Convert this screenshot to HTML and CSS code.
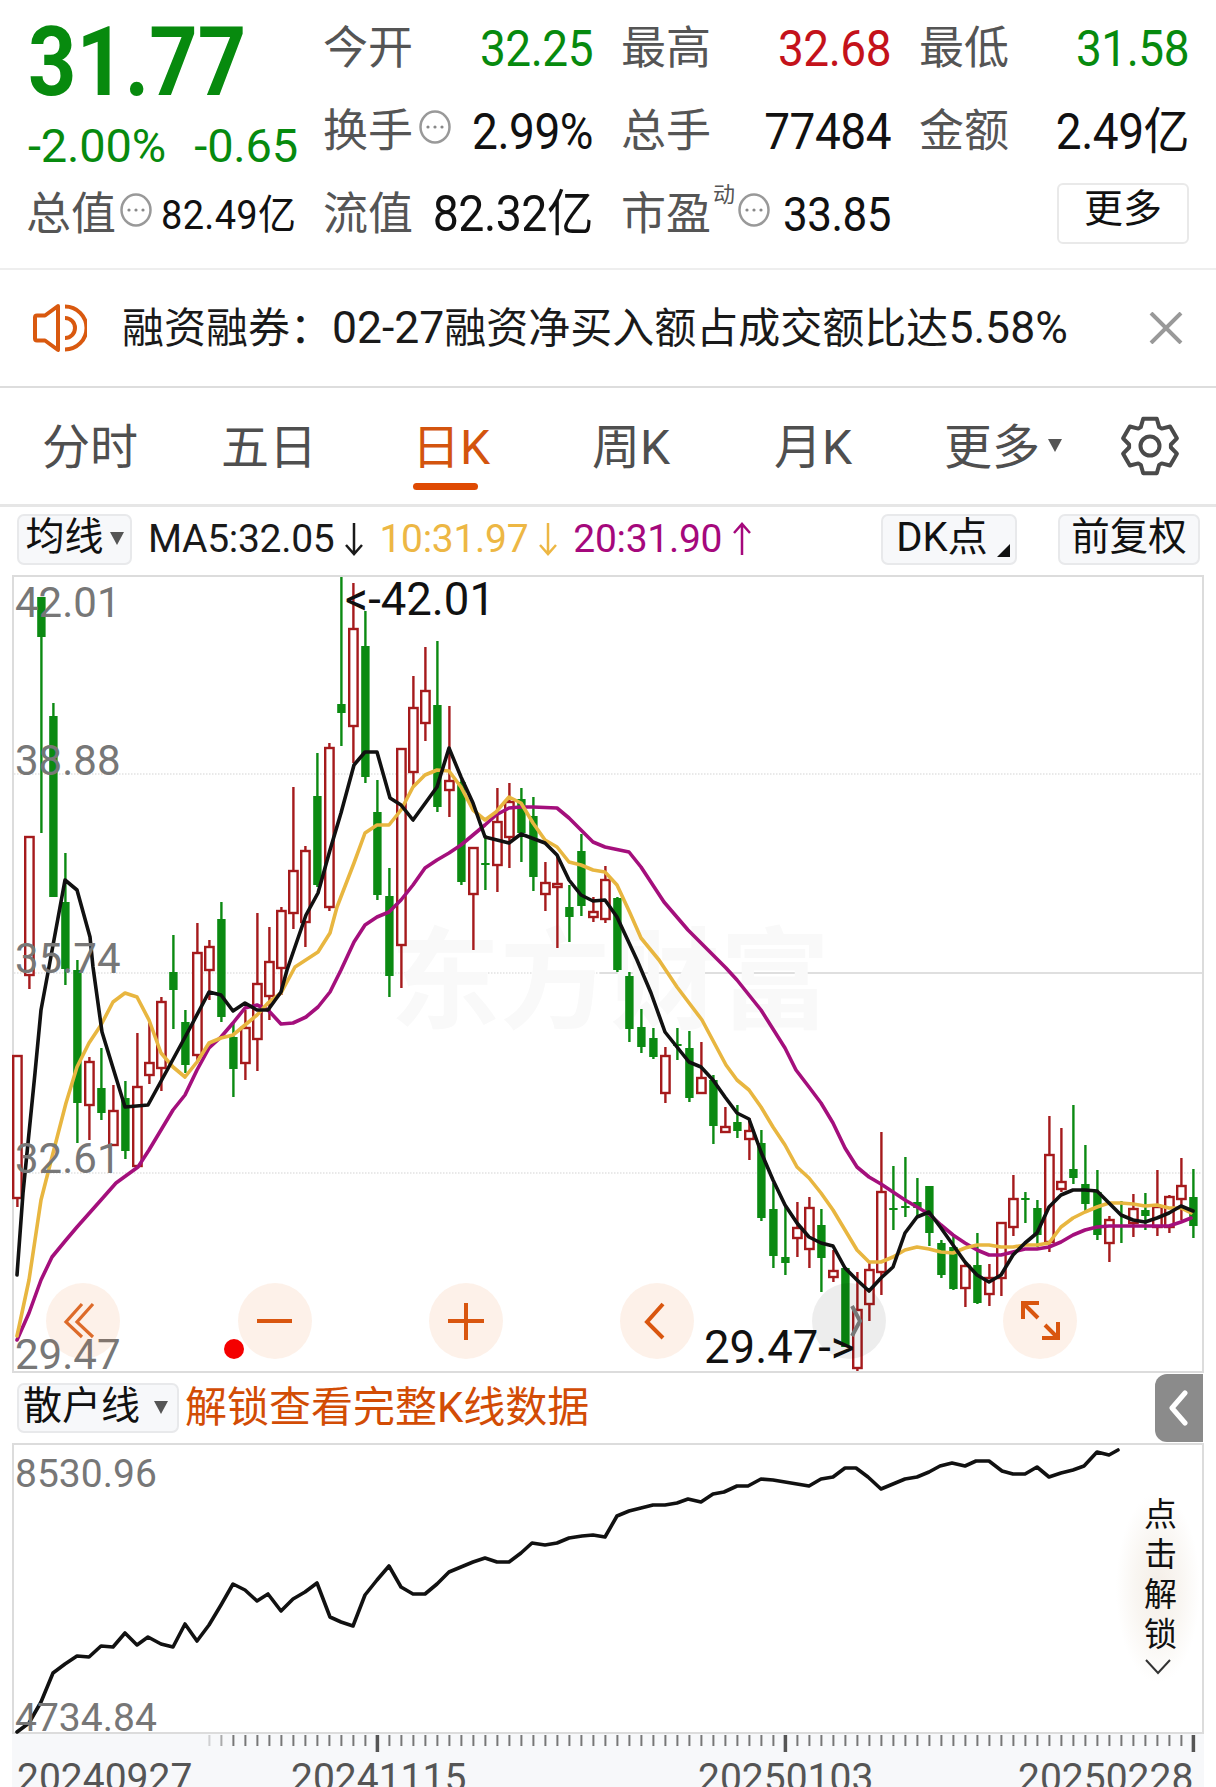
FILE: index.html
```html
<!DOCTYPE html>
<html lang="zh-CN">
<head>
<meta charset="utf-8">
<title>日K</title>
<link rel="stylesheet" href="styles.css">
</head>
<body>
<main class="page">

<section class="quote">
  <div class="headline">
    <div class="price down">31.77</div>
    <div class="change down"><span>-2.00%</span><span>-0.65</span></div>
    <div class="cap">
      <span class="lbl">总值</span>
      <svg class="dots" viewBox="0 0 32 34"><ellipse cx="16" cy="17" rx="14.5" ry="15.5"/><circle cx="9" cy="17" r="1.6"/><circle cx="16" cy="17" r="1.6"/><circle cx="23" cy="17" r="1.6"/></svg>
      <span class="val small">82.49亿</span>
    </div>
  </div>
  <div class="stats">
    <div class="stat"><span class="lbl">今开</span><span class="val down">32.25</span></div>
    <div class="stat"><span class="lbl">最高</span><span class="val rise">32.68</span></div>
    <div class="stat"><span class="lbl">最低</span><span class="val down">31.58</span></div>
    <div class="stat">
      <span class="lblset"><span class="lbl">换手</span><svg class="dots" viewBox="0 0 32 34"><ellipse cx="16" cy="17" rx="14.5" ry="15.5"/><circle cx="9" cy="17" r="1.6"/><circle cx="16" cy="17" r="1.6"/><circle cx="23" cy="17" r="1.6"/></svg></span>
      <span class="val">2.99%</span>
    </div>
    <div class="stat"><span class="lbl">总手</span><span class="val">77484</span></div>
    <div class="stat"><span class="lbl">金额</span><span class="val">2.49亿</span></div>
    <div class="stat"><span class="lbl">流值</span><span class="val wide">82.32亿</span></div>
    <div class="stat">
      <span class="lblset"><span class="lbl">市盈</span><sup class="dyn">动</sup><svg class="dots tight" viewBox="0 0 32 34"><ellipse cx="16" cy="17" rx="14.5" ry="15.5"/><circle cx="9" cy="17" r="1.6"/><circle cx="16" cy="17" r="1.6"/><circle cx="23" cy="17" r="1.6"/></svg></span>
      <span class="val narrow">33.85</span>
    </div>
    <div class="stat end"><button class="more">更多</button></div>
  </div>
</section>

<section class="notice">
  <svg class="speaker" viewBox="0 0 54 50"><path d="M25 3 12 12.500H4Q2 12.500 2 14.500V35.500Q2 37.500 4 37.500H12L25 47Z"/><path d="M32 3.500A21.500 21.500 0 0 1 32 46.500"/><path d="M32 15A10 10 0 0 1 32 35"/></svg>
  <p class="notice-text">融资融券：<span class="nnum">02-27</span>融资净买入额占成交额比达<span class="nnum">5.58%</span></p>
  <svg class="close" viewBox="0 0 34 32"><path d="M2 1 32 31M32 1 2 31"/></svg>
</section>

<nav class="tabs">
  <span class="tab">分时</span>
  <span class="tab">五日</span>
  <span class="tab active">日K</span>
  <span class="tab">周K</span>
  <span class="tab">月K</span>
  <span class="tab">更多<i class="tri tab-tri"></i></span>
  <span class="gear-cell">
    <svg class="gear" viewBox="-30 -30 60 60"><path d="M-9.200-18.900-6.800-27.200H6.800L9.200-18.900 11.700-17.400 20.100-19.500 26.900-7.700 20.900-1.500V1.500L26.900 7.700 20.100 19.500 11.700 17.400 9.200 18.900 6.800 27.200H-6.800L-9.200 18.900-11.700 17.400-20.100 19.500-26.900 7.700-20.900 1.500V-1.500L-26.900-7.700-20.100-19.500-11.700-17.400Z"/><circle r="9.500"/></svg>
  </span>
</nav>

<section class="toolbar">
  <button class="chip ma-chip">均线<i class="tri"></i></button>
  <div class="ma-values">
    <span class="ma5">MA5:32.05</span><svg class="arw ma5" viewBox="0 0 22 34"><path d="M11 1V32M3 23 11 32 19 23"/></svg>
    <span class="ma10">10:31.97</span><svg class="arw ma10" viewBox="0 0 22 34"><path d="M11 1V32M3 23 11 32 19 23"/></svg>
    <span class="ma20">20:31.90</span><svg class="arw ma20" viewBox="0 0 22 34"><path d="M11 33V2M3 11 11 2 19 11"/></svg>
  </div>
  <button class="chip dk-chip">DK点<i class="corner"></i></button>
  <button class="chip fq-chip">前复权</button>
</section>

<section class="kchart">
  <svg class="plot" viewBox="14 577 1188 794" width="1188" height="794">
    <line class="grid" x1="14" x2="1202" y1="774" y2="774"/>
    <line class="grid" x1="14" x2="600" y1="973" y2="973"/>
    <line class="grid solid" x1="600" x2="1202" y1="973" y2="973"/>
    <line class="grid" x1="14" x2="1202" y1="1173" y2="1173"/>
    <text class="mark" x="390" y="1020">东方财富</text>
    <g id="candles"></g>
    <polyline class="ln ma20-ln" points="17,1340 29,1313 41,1280 52,1257 66,1240 77,1227 101,1200 116,1183 138,1167 149,1150 161,1130 173,1110 185,1095 197,1070 209,1048 221,1037 233,1023 245,1008 257,1005 268,1010 281,1024 293,1023 306,1017 318,1007 330,992 341,970 354,942 365,925 377,917 389,912 401,900 413,885 425,868 437,860 449,853 461,845 473,835 485,825 496,815 509,808 521,807 533,807 557,808 569,818 581,830 593,842 605,847 629,852 641,867 664,902 688,930 703,945 726,968 737,980 761,1010 785,1048 796,1070 809,1087 821,1103 833,1123 845,1148 857,1167 869,1177 881,1184 893,1192 905,1200 917,1207 929,1214 941,1225 953,1235 965,1243 977,1250 989,1255 1001,1255 1013,1252 1025,1249 1037,1249 1049,1247 1061,1242 1073,1235 1085,1230 1097,1227 1109,1226 1169,1226 1181,1222 1191,1218"/>
    <polyline class="ln ma10-ln" points="17,1336 29,1280 41,1200 52,1157 66,1103 77,1067 89,1043 101,1025 113,1002 125,993 137,997 149,1020 161,1053 173,1067 185,1077 197,1062 209,1043 221,1038 233,1035 245,1025 257,1015 268,1003 281,993 295,967 318,952 330,933 337,907 354,863 365,833 377,825 389,825 401,810 413,787 425,775 437,770 449,771 461,787 473,810 485,820 496,812 509,797 521,803 533,823 545,840 557,847 569,862 581,865 593,870 605,872 617,885 630,913 641,938 659,960 677,987 702,1020 726,1065 737,1080 749,1090 761,1107 773,1127 785,1145 797,1167 809,1178 821,1193 833,1210 845,1230 857,1250 869,1262 881,1262 893,1257 905,1250 917,1247 929,1249 941,1252 953,1253 965,1248 977,1245 989,1245 1001,1247 1013,1247 1025,1245 1037,1245 1049,1243 1061,1227 1073,1218 1085,1212 1097,1207 1109,1203 1121,1203 1133,1204 1145,1206 1157,1205 1169,1208 1181,1208 1191,1213"/>
    <polyline class="ln ma5-ln" points="17,1275 23,1193 35,1073 41,1010 49,967 65,880 77,890 90,937 93,967 102,1032 125,1107 148,1105 171,1063 190,1028 209,992 221,995 233,1011 245,1003 257,1010 268,1010 281,992 287,970 306,915 318,893 330,850 341,813 354,765 365,752 377,752 390,798 401,805 413,820 437,787 449,748 461,777 473,803 485,837 509,843 521,834 545,843 557,855 569,880 581,895 593,901 605,900 617,917 637,960 651,993 665,1032 677,1047 689,1062 701,1067 713,1080 725,1097 737,1113 749,1119 761,1152 773,1180 785,1205 797,1223 809,1237 821,1243 833,1246 845,1268 857,1280 869,1291 881,1278 893,1267 905,1233 917,1217 929,1212 941,1228 953,1245 965,1262 977,1275 989,1282 1001,1275 1013,1255 1025,1243 1037,1233 1049,1207 1061,1195 1073,1190 1085,1190 1097,1191 1109,1203 1121,1215 1133,1220 1145,1222 1157,1218 1169,1213 1181,1206 1193,1211"/>

    <text class="ax" x="15" y="617">42.01</text>
    <text class="ax" x="15" y="775">38.88</text>
    <text class="ax" x="15" y="973">35.74</text>
    <text class="ax" x="15" y="1173">32.61</text>
    <text class="ax" x="15" y="1369">29.47</text>
    <text class="ext" x="345" y="615">&lt;-42.01</text>
    <text class="ext" x="704" y="1363">29.47-&gt;</text>

    <ellipse class="disc" cx="83" cy="1321" rx="37" ry="38"/>
    <ellipse class="disc" cx="275" cy="1321" rx="37" ry="38"/>
    <ellipse class="disc" cx="466" cy="1321" rx="37" ry="38"/>
    <ellipse class="disc" cx="657" cy="1321" rx="37" ry="38"/>
    <ellipse class="disc grey" cx="849" cy="1321" rx="37" ry="38"/>
    <ellipse class="disc" cx="1040" cy="1321" rx="37" ry="38"/>
    <path class="glyph thin" d="M82 1304 66 1322 82 1337M93 1304 77 1322 93 1337"/>
    <path class="glyph" d="M257 1321H292"/>
    <path class="glyph" d="M448 1321H484M466 1303V1340"/>
    <path class="glyph" d="M663 1304 647 1322 663 1338"/>
    <path class="glyph dim" d="M852 1306 860 1321 852 1336"/>
    <path class="glyph" d="M1039 1303H1023V1319M1024 1304 1038 1318M1042 1338H1058V1322M1057 1337 1045 1325"/>
    <ellipse class="dot" cx="234" cy="1349" rx="10" ry="10"/>
  </svg>
</section>

<section class="subhead">
  <button class="chip sub-chip">散户线<i class="tri"></i></button>
  <span class="unlock">解锁查看完整K线数据</span>
  <span class="lock-tab"><svg viewBox="0 0 22 36"><path d="M17 3 4 18 17 33"/></svg></span>
</section>

<section class="subchart">
  <svg class="plot" viewBox="14 1445 1188 287" width="1188" height="287">
    <polyline class="ln retail" points="17,1732 29,1723 41,1702 53,1673 65,1664 77,1656 89,1657 101,1646 113,1647 125,1633 137,1645 148,1637 161,1644 173,1647 185,1624 197,1641 209,1625 221,1605 233,1584 245,1590 257,1601 268,1594 281,1611 293,1599 305,1592 317,1583 330,1617 341,1622 353,1626 365,1595 377,1580 389,1566 401,1587 413,1594 425,1594 437,1584 449,1572 461,1567 473,1562 485,1558 497,1562 509,1562 521,1553 532,1543 545,1545 557,1543 569,1538 582,1536 593,1535 605,1537 617,1516 629,1511 641,1508 653,1505 665,1505 677,1503 688,1499 701,1502 713,1494 724,1492 737,1486 748,1486 761,1479 773,1480 785,1482 797,1484 809,1486 821,1479 833,1477 845,1468 856,1468 868,1477 881,1489 893,1484 905,1479 917,1477 929,1472 940,1466 952,1463 965,1466 976,1461 989,1461 1002,1471 1013,1474 1025,1474 1037,1467 1049,1477 1061,1473 1073,1470 1084,1466 1097,1452 1109,1455 1118,1450"/>
    <text class="ax sub" x="15" y="1487">8530.96</text>
    <text class="ax sub" x="15" y="1731">4734.84</text>
  </svg>
  <div class="unlock-side">
    <span class="side-text">点击解锁</span>
    <svg viewBox="0 0 26 16"><path d="M1 1 13 14 25 1"/></svg>
  </div>
</section>

<section class="timeaxis">
  <svg viewBox="12 1734 1192 53" width="1192" height="53">
    <g id="ticks"></g>
    <text class="date" x="17" y="1791">20240927</text>
    <text class="date" x="291" y="1791">20241115</text>
    <text class="date" x="698" y="1791">20250103</text>
    <text class="date" x="1018" y="1791">20250228</text>
  </svg>
</section>

</main>
<script src="chart.js"></script>
</body>
</html>
```
FILE: styles.css
```css
* { box-sizing: border-box; }
html, body { margin: 0; padding: 0; background: #fff; }
body { width: 1216px; height: 1787px; overflow: hidden; }
.page {
  width: 1216px; height: 1787px; overflow: hidden;
  font-family: Roboto, "Noto Sans CJK SC", sans-serif; color: #111;
}
button { font: inherit; color: inherit; padding: 0; }

.down { color: #078a0e; }
.rise { color: #c4121b; }

/* quote */
.quote { display: flex; height: 270px; border-bottom: 2px solid #eee; padding: 7px 0 0 28px; }
.headline { width: 295px; flex: none; }
.price { height: 110px; line-height: 110px; font-size: 97px; font-weight: 700; transform: scaleX(.87); transform-origin: 0 50%; white-space: nowrap; }
.change { height: 56px; display: flex; justify-content: space-between; align-items: center; width: 270px; font-size: 47px; letter-spacing: -.2px; }
.cap { height: 83px; display: flex; align-items: center; margin-left: -2px; }
.cap .dots { margin: -10px 9px 0 4px; }
.stats { display: grid; grid-template-columns: repeat(3, 270px); grid-auto-rows: 83px; column-gap: 28px; }
.stat { display: flex; justify-content: space-between; align-items: center; }
.stat.end { justify-content: flex-end; margin-top: -2px; }
.lblset { display: flex; align-items: center; }
.lbl { font-size: 45px; color: #555; line-height: 1; white-space: nowrap; }
.val { font-size: 46px; letter-spacing: -.5px; line-height: 1; white-space: nowrap; transform: scaleY(1.08); }
.val.wide { font-size: 46.500px; }
.val.narrow { font-size: 44px; }
.val.small { font-size: 38px; letter-spacing: .3px; }
.dots { width: 32px; height: 34px; flex: none; margin: -10px 0 0 6px; }
.dots.tight { margin-left: 0; }
.dots ellipse { fill: none; stroke: #999; stroke-width: 2.500; }
.dots circle { fill: #888; }
.dyn { font-size: 22px; color: #555; line-height: 1; align-self: flex-start; margin: -8px 3px 0 2px; width: 22px; }
.more { width: 132px; height: 61px; font-size: 39px; line-height: 1; padding-bottom: 8px; background: #fff; border: 2px solid #e9e9e9; border-radius: 6px; }

/* notice */
.notice { display: flex; align-items: center; height: 118px; border-bottom: 2px solid #ddd; padding: 0 33px; }
.speaker { width: 54px; height: 50px; flex: none; fill: none; stroke: #d9590f; stroke-width: 4; stroke-linejoin: round; }
.notice-text { margin: 0 0 0 35px; font-size: 42px; line-height: 1; white-space: nowrap; color: #1a1a1a; }
.nnum { font-size: 44.500px; }
.close { width: 34px; height: 32px; margin-left: auto; fill: none; stroke: #999; stroke-width: 4; }

/* tabs */
.tabs { display: grid; grid-template-columns: 180px 178px 186px 174px 190px 190px 1fr; height: 119px; border-bottom: 3px solid #e6e6e6; align-items: center; padding-top: 4px; }
.tab { justify-self: center; font-size: 48px; color: #4f4f4f; line-height: 1; position: relative; display: flex; align-items: center; }
.tab.active { color: #d3540e; }
.tab.active::after { content: ""; position: absolute; left: 1px; width: 65px; height: 7px; top: 59px; border-radius: 4px; background: #df4a03; }
.tri { display: inline-block; width: 0; height: 0; border-left: 7px solid transparent; border-right: 7px solid transparent; border-top: 13px solid #555; }
.tab-tri { margin-left: 8px; margin-top: -6px; }
.gear-cell { display: flex; justify-content: flex-end; padding-right: 36px; margin-top: -4px; }
.gear { width: 60px; height: 60px; fill: none; stroke: #4a4a4a; stroke-width: 4; stroke-linejoin: round; }

/* toolbar */
.toolbar { display: flex; align-items: center; height: 68px; padding: 0 16px 4px 17px; }
.chip { height: 51px; padding-bottom: 3px; background: #f7f8fa; border: 2px solid #e8e9eb; border-radius: 7px; font-size: 39px; line-height: 1; display: flex; align-items: center; justify-content: center; position: relative; white-space: nowrap; }
.ma-chip { width: 115px; gap: 6px; }
.ma-chip .tri { margin-top: 2px; }
.ma-values { display: flex; align-items: center; margin-left: 16px; font-size: 39px; letter-spacing: -.3px; line-height: 1; }
.ma5 { color: #1a1a1a; stroke: #1a1a1a; }
.ma10 { color: #edb744; stroke: #edb744; }
.ma20 { color: #a5087c; stroke: #a5087c; }
.arw { width: 22px; height: 34px; fill: none; stroke-width: 2.500; margin: 0 14px 0 9px; }
.dk-chip { width: 136px; margin-left: auto; padding-right: 14px; font-size: 40px; }
.corner { position: absolute; right: 5px; bottom: 6px; width: 0; height: 0; border-bottom: 13px solid #111; border-left: 13px solid transparent; }
.fq-chip { width: 142px; margin-left: 41px; font-size: 38.500px; }

/* charts */
.kchart { margin-left: 12px; width: 1192px; height: 798px; border: 2px solid #dcdcdc; }
.plot { display: block; overflow: visible; }
.grid { stroke: #e2e2e2; stroke-width: 1.500; stroke-dasharray: 1.500 1.500; }
.grid.solid { stroke: #d4d4d4; stroke-dasharray: none; }
.mark { font: 700 110px "Noto Sans CJK SC", sans-serif; fill: #f9f9f9; }
.c-wick-g { stroke: #0b8a12; stroke-width: 2.400; }
.c-wick-r { stroke: #a51a1c; stroke-width: 2.400; }
.c-body-g { fill: #0b8a12; }
.c-body-r { fill: #fff; stroke: #a51a1c; stroke-width: 2.400; }
.ln { fill: none; stroke-width: 3.600; stroke-linejoin: round; stroke-linecap: round; }
.ma5-ln, .retail { stroke: #111; }
.ma10-ln { stroke: #e8b640; }
.ma20-ln { stroke: #a40f7c; }
.ax { font: 400 42px Roboto, sans-serif; fill: #777; }
.ax.sub { font-size: 39px; }
.ext { font: 400 45.500px Roboto, sans-serif; fill: #111; }
.disc { fill: rgba(240, 115, 40, .1); }
.disc.grey { fill: rgba(0, 0, 0, .07); }
.glyph { fill: none; stroke: #d9560f; stroke-width: 4; }
.glyph.thin { stroke-width: 3.200; stroke: #dd6b2a; }
.glyph.dim { stroke: #777; }
.dot { fill: #f40000; }

.subhead { display: flex; align-items: center; height: 70px; padding-left: 17px; position: relative; }
.sub-chip { width: 162px; height: 50px; gap: 14px; justify-content: flex-start; padding-left: 4px; color: #111; }
.sub-chip .tri { margin-top: 2px; }
.unlock { margin-left: 6px; font-size: 42px; line-height: 1; color: #d24c05; white-space: nowrap; }
.lock-tab { position: absolute; right: 13px; top: 1px; width: 48px; height: 68px; background: #8b8b8b; border-radius: 12px 0 0 12px; display: flex; align-items: center; justify-content: center; }
.lock-tab svg { width: 22px; height: 36px; fill: none; stroke: #fff; stroke-width: 5; stroke-linecap: round; stroke-linejoin: round; }

.subchart { margin-left: 12px; width: 1192px; height: 291px; border: 2px solid #dcdcdc; position: relative; }
.unlock-side { position: absolute; left: 1102px; top: 48px; width: 84px; height: 190px; display: flex; flex-direction: column; align-items: center; padding-top: 4px; background: radial-gradient(ellipse closest-side, #f4eee7 0%, #f9f6f2 55%, rgba(255,255,255,0) 100%); }
.side-text { writing-mode: vertical-rl; font-size: 33px; letter-spacing: 7px; line-height: 1; color: #111; }
.unlock-side svg { width: 26px; height: 16px; fill: none; stroke: #333; stroke-width: 2; margin-top: 2px; }

.timeaxis { margin-left: 12px; width: 1192px; height: 53px; background: #f7f8fa; overflow: hidden; }
.timeaxis svg { display: block; }
.tick { stroke: #777; stroke-width: 2; }
.tick.major { stroke: #555; stroke-width: 3.500; }
.date { font: 400 39px Roboto, sans-serif; fill: #555; }
```
FILE: chart.js
```js
// [type, high, bodyTop, bodyBottom, low]; candles are 12px apart, starting at x = 17.4
var K = [
['r',1056,1056,1198,1207],['r',837,837,975,989],['g',597,597,637,833],['g',703,716,897,897],['g',853,902,969,985],
['g',960,970,1103,1143],['r',1057,1062,1105,1140],['g',1048,1088,1113,1120],['r',1085,1111,1145,1146],['g',1081,1098,1151,1159],
['r',1033,1087,1166,1166],['r',1023,1063,1075,1084],['r',997,1002,1068,1091],['g',935,972,990,1029],['g',1010,1022,1065,1073],
['r',923,953,1055,1062],['r',940,947,970,1000],['g',902,919,1017,1022],['g',1023,1037,1069,1097],['r',1010,1028,1063,1080],
['r',913,984,1039,1071],['r',927,962,996,1020],['r',907,911,968,995],['r',787,871,913,929],['r',846,851,922,947],
['g',753,796,885,887],['r',743,748,907,911],['g',577,704,713,746],['r',583,629,726,763],['g',611,646,777,783],
['g',780,812,895,900],['g',868,896,976,997],['r',749,749,945,988],['r',676,708,772,787],['r',647,691,723,741],
['g',641,705,807,812],['r',706,781,790,817],['g',780,782,882,885],['r',847,848,894,950],['g',835,863,865,890],
['r',788,822,865,892],['r',783,802,837,868],['g',788,799,833,862],['g',797,816,877,891],['r',862,883,894,911],
['r',857,884,887,948],['g',885,907,917,942],['g',834,851,906,916],['r',897,912,917,922],['r',866,880,919,923],
['g',897,898,970,972],['g',972,976,1029,1042],['g',1009,1027,1047,1053],['g',1028,1038,1057,1059],['r',1047,1056,1093,1103],
['g',1028,1044,1046,1060],['g',1031,1048,1098,1102],['r',1042,1078,1093,1093],['g',1075,1080,1126,1144],['r',1107,1127,1132,1133],
['g',1105,1122,1131,1138],['r',1118,1131,1139,1160],['g',1130,1143,1218,1221],['g',1183,1209,1256,1268],['g',1206,1257,1263,1275],
['r',1202,1228,1238,1257],['r',1197,1208,1249,1268],['g',1209,1225,1258,1292],['r',1250,1271,1277,1282],['g',1267,1268,1347,1347],
['r',1272,1310,1368,1371],['r',1262,1270,1304,1321],['r',1132,1192,1272,1295],['g',1166,1208,1210,1230],['g',1157,1206,1208,1217],
['g',1178,1202,1208,1218],['g',1186,1186,1233,1246],['g',1240,1243,1275,1278],['g',1235,1247,1289,1290],['r',1262,1266,1288,1307],
['g',1233,1265,1303,1304],['r',1264,1278,1294,1306],['r',1223,1223,1278,1296],['r',1175,1199,1227,1236],['g',1192,1198,1200,1223],
['g',1200,1208,1235,1247],['r',1116,1155,1242,1252],['r',1128,1182,1189,1192],['g',1105,1169,1178,1184],['g',1145,1184,1204,1213],
['g',1170,1192,1235,1240],['r',1216,1220,1243,1262],['g',1201,1225,1227,1243],['r',1194,1209,1223,1237],['g',1193,1210,1216,1230],
['r',1170,1207,1227,1236],['r',1195,1197,1227,1233],['r',1158,1186,1199,1220],['g',1169,1197,1226,1238]
];

var NS = 'http://www.w3.org/2000/svg';
function el(parent, name, attrs) {
  var n = document.createElementNS(NS, name);
  for (var a in attrs) n.setAttribute(a, attrs[a]);
  parent.appendChild(n);
  return n;
}

var box = document.getElementById('candles');
K.forEach(function (c, i) {
  var x = 17.4 + 12 * i, t = c[0];
  el(box, 'line', { x1: x, x2: x, y1: c[1], y2: c[4], 'class': 'c-wick-' + t });
  el(box, 'rect', { x: x - 4.2, y: c[2], width: 8.4, height: Math.max(c[3] - c[2], 2), 'class': 'c-body-' + t });
});

var ticks = document.getElementById('ticks');
for (var i = 16; i <= 98; i++) {
  var x = 17.4 + 12 * i, major = i === 30 || i === 64 || i === 98;
  var t = el(ticks, 'line', { x1: x, x2: x, y1: 1735, y2: major ? 1752 : 1746, 'class': major ? 'tick major' : 'tick' });
  if (i < 18) t.setAttribute('opacity', i === 16 ? .3 : .6);
}
```
